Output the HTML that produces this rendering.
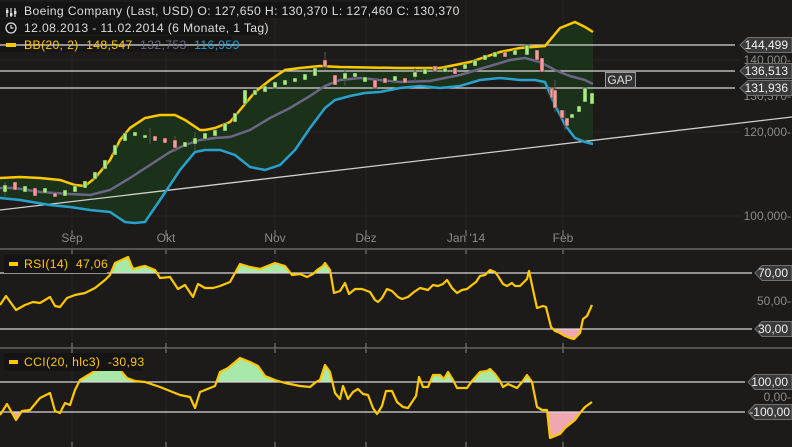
<!DOCTYPE html>
<html><head><meta charset="utf-8"><style>
html,body{margin:0;padding:0;background:#1c1b1a;width:792px;height:447px;overflow:hidden}
svg{display:block;font-family:"Liberation Sans",sans-serif}
</style></head><body>
<svg width="792" height="447" viewBox="0 0 792 447">
<defs>
<clipPath id="rsiUp"><rect x="0" y="250" width="792" height="23"/></clipPath>
<clipPath id="rsiDn"><rect x="0" y="329" width="792" height="19"/></clipPath>
<clipPath id="cciUp"><rect x="0" y="349" width="792" height="33"/></clipPath>
<clipPath id="cciDn"><rect x="0" y="412" width="792" height="35"/></clipPath>
</defs>
<rect width="792" height="447" fill="#1c1b1a"/>
<g stroke="#262524" stroke-width="1">
<line x1="72" y1="0" x2="72" y2="447"/><line x1="166" y1="0" x2="166" y2="447"/><line x1="275" y1="0" x2="275" y2="447"/><line x1="366" y1="0" x2="366" y2="447"/><line x1="466" y1="0" x2="466" y2="447"/><line x1="563" y1="0" x2="563" y2="447"/>
<line x1="0" y1="60" x2="740" y2="60"/><line x1="0" y1="132" x2="740" y2="132"/><line x1="0" y1="216" x2="740" y2="216"/>
</g>
<path fill="#1b3119" d="M0,178 L20,177 L40,178 L60,180 L75,185 L85,186 L95,178 L110,160 L120,140 L130,128 L145,118 L160,115 L175,115 L185,120 L200,130 L205,130 L215,128 L230,122 L240,110 L255,92 L270,80 L285,70 L300,68 L320,66 L340,67 L400,68 L440,68 L470,62 L500,52 L520,48 L545,46 L560,28 L575,22 L585,27 L593,32 L593,143 L585,142 L575,138 L565,125 L555,110 L545,90 L535,80 L520,80 L500,78 L480,80 L460,86 L440,88 L420,86 L400,88 L380,92 L365,93 L350,96 L335,100 L325,108 L310,128 L295,150 L280,165 L265,170 L250,167 L235,155 L220,150 L205,150 L195,152 L180,170 L160,200 L145,222 L135,223 L125,222 L110,212 L90,210 L70,207 L50,205 L20,200 L0,198 Z"/>
<line x1="0" y1="210" x2="792" y2="117" stroke="#cfcfcf" stroke-width="1.3"/>
<g stroke="#d8d8d8" stroke-width="1.3"><line x1="0" y1="45" x2="735" y2="45"/><line x1="0" y1="71" x2="735" y2="71"/><line x1="0" y1="88" x2="735" y2="88"/></g>
<polyline fill="none" stroke="#6b6685" stroke-width="2.5" points="0,188 15,188 40,192 70,194 90,195 110,190 130,178 150,165 170,152 185,145 200,140 215,138 230,137 250,130 270,118 290,108 310,96 325,86 340,80 360,78 380,80 400,82 430,81 460,75 490,66 510,60 525,58 540,62 555,70 570,76 585,80 593,84"/>
<polyline fill="none" stroke="#2aa0cc" stroke-width="2.5" points="0,198 20,200 50,205 70,207 90,210 110,212 125,222 135,223 145,222 160,200 180,170 195,152 205,150 220,150 235,155 250,167 265,170 280,165 295,150 310,128 325,108 335,100 350,96 365,93 380,92 400,88 420,86 440,88 460,86 480,80 500,78 520,80 535,80 545,82 555,105 565,125 575,138 585,142 593,144"/>
<polyline fill="none" stroke="#ffc800" stroke-width="2.5" points="0,178 20,177 40,178 60,180 75,185 85,186 95,178 110,160 120,140 130,128 145,118 160,115 175,115 185,120 200,130 205,130 215,128 230,122 240,110 255,92 270,80 285,70 300,68 320,66 340,67 400,68 440,68 470,62 500,52 520,48 545,46 560,28 575,22 585,27 593,32"/>
<g stroke="#555" stroke-width="1">
<line x1="5" y1="182" x2="5" y2="196"/><line x1="150" y1="128" x2="150" y2="144"/><line x1="325" y1="52" x2="325" y2="70"/><line x1="555" y1="80" x2="555" y2="112"/><line x1="565" y1="110" x2="565" y2="130"/><line x1="175" y1="136" x2="175" y2="152"/><line x1="195" y1="132" x2="195" y2="150"/><line x1="345" y1="68" x2="345" y2="86"/><line x1="415" y1="68" x2="415" y2="82"/>
</g>
<g fill="#a6ee80" stroke="#2d3b25" stroke-width="0.5">
<rect x="3" y="185" width="4" height="7"/><rect x="23" y="186" width="4" height="6"/><rect x="43" y="188" width="4" height="5"/><rect x="63" y="190" width="4" height="6"/><rect x="73" y="186" width="4" height="6"/><rect x="83" y="181" width="4" height="7"/><rect x="93" y="172" width="4" height="7"/><rect x="103" y="160" width="4" height="9"/><rect x="113" y="145" width="4" height="10"/><rect x="123" y="133" width="4" height="8"/><rect x="133" y="132" width="4" height="4"/><rect x="143" y="135" width="4" height="3"/><rect x="183" y="142" width="4" height="5"/><rect x="193" y="138" width="4" height="6"/><rect x="203" y="133" width="4" height="6"/><rect x="213" y="130" width="4" height="6"/><rect x="223" y="123" width="4" height="8"/><rect x="233" y="113" width="4" height="9"/><rect x="243" y="90" width="4" height="14"/><rect x="253" y="90" width="4" height="5"/><rect x="263" y="86" width="4" height="6"/><rect x="273" y="82" width="4" height="6"/><rect x="283" y="80" width="4" height="5"/><rect x="293" y="78" width="4" height="4"/><rect x="303" y="74" width="4" height="6"/><rect x="313" y="68" width="4" height="8"/><rect x="343" y="73" width="4" height="6"/><rect x="353" y="73" width="4" height="4"/><rect x="363" y="77" width="4" height="5"/><rect x="393" y="76" width="4" height="5"/><rect x="413" y="72" width="4" height="5"/><rect x="423" y="69" width="4" height="5"/><rect x="443" y="68" width="4" height="4"/><rect x="463" y="64" width="4" height="5"/><rect x="473" y="60" width="4" height="6"/><rect x="483" y="55" width="4" height="5"/><rect x="493" y="52" width="4" height="5"/><rect x="513" y="50" width="4" height="5"/><rect x="525" y="45" width="4" height="10"/><rect x="570" y="114" width="4" height="4"/><rect x="577" y="106" width="4" height="6"/><rect x="583" y="88" width="4" height="14"/><rect x="590" y="93" width="4" height="11"/>
</g>
<g fill="#f49c9c" stroke="#3b2525" stroke-width="0.5">
<rect x="13" y="182" width="4" height="8"/><rect x="33" y="188" width="4" height="8"/><rect x="53" y="193" width="4" height="4"/><rect x="153" y="136" width="4" height="5"/><rect x="163" y="138" width="4" height="5"/><rect x="173" y="140" width="4" height="8"/><rect x="323" y="60" width="4" height="7"/><rect x="333" y="75" width="4" height="10"/><rect x="373" y="80" width="4" height="8"/><rect x="383" y="78" width="4" height="5"/><rect x="403" y="78" width="4" height="5"/><rect x="433" y="66" width="4" height="5"/><rect x="453" y="68" width="4" height="6"/><rect x="503" y="52" width="4" height="5"/><rect x="535" y="50" width="4" height="10"/><rect x="540" y="58" width="4" height="14"/><rect x="550" y="88" width="4" height="10"/><rect x="553" y="90" width="4" height="18"/><rect x="560" y="110" width="4" height="8"/><rect x="565" y="118" width="4" height="8"/>
</g>
<rect x="605.5" y="72.5" width="30" height="15" fill="#333" stroke="#999"/>
<text x="620" y="84" fill="#ddd" font-size="12" text-anchor="middle">GAP</text>
<g stroke="#666" stroke-width="1.5"><line x1="0" y1="249" x2="792" y2="249"/><line x1="0" y1="348" x2="792" y2="348"/></g>
<g stroke="#888" stroke-width="1"><line x1="72" y1="230" x2="72" y2="236"/><line x1="166" y1="230" x2="166" y2="236"/><line x1="275" y1="230" x2="275" y2="236"/><line x1="366" y1="230" x2="366" y2="236"/><line x1="466" y1="230" x2="466" y2="236"/><line x1="563" y1="230" x2="563" y2="236"/>
<line x1="72" y1="250" x2="72" y2="254"/><line x1="166" y1="250" x2="166" y2="254"/><line x1="275" y1="250" x2="275" y2="254"/><line x1="366" y1="250" x2="366" y2="254"/><line x1="466" y1="250" x2="466" y2="254"/><line x1="563" y1="250" x2="563" y2="254"/>
<line x1="72" y1="343" x2="72" y2="348"/><line x1="166" y1="343" x2="166" y2="348"/><line x1="275" y1="343" x2="275" y2="348"/><line x1="366" y1="343" x2="366" y2="348"/><line x1="466" y1="343" x2="466" y2="348"/><line x1="563" y1="343" x2="563" y2="348"/>
<line x1="72" y1="349" x2="72" y2="353"/><line x1="166" y1="349" x2="166" y2="353"/><line x1="275" y1="349" x2="275" y2="353"/><line x1="366" y1="349" x2="366" y2="353"/><line x1="466" y1="349" x2="466" y2="353"/><line x1="563" y1="349" x2="563" y2="353"/>
<line x1="72" y1="442" x2="72" y2="447"/><line x1="166" y1="442" x2="166" y2="447"/><line x1="275" y1="442" x2="275" y2="447"/><line x1="366" y1="442" x2="366" y2="447"/><line x1="466" y1="442" x2="466" y2="447"/><line x1="563" y1="442" x2="563" y2="447"/></g>
<g fill="#8a8a8a" font-size="12" text-anchor="middle"><text x="72" y="242">Sep</text><text x="166" y="242">Okt</text><text x="275" y="242">Nov</text><text x="366" y="242">Dez</text><text x="466" y="242">Jan '14</text><text x="563" y="242">Feb</text></g>
<path clip-path="url(#rsiUp)" fill="#a8e8a8" d="M0,305 L6,296 L16,310 L25,305 L33,302 L40,303 L50,297 L55,306 L60,307 L67,298 L75,295 L85,293 L95,288 L105,280 L110,275 L115,263 L128,257 L133,269 L140,267 L145,266 L155,270 L160,278 L170,277 L178,289 L185,285 L193,297 L198,284 L205,288 L213,288 L220,286 L230,282 L240,264 L250,267 L260,269 L275,263 L285,266 L292,275 L300,274 L307,277 L313,274 L317,270 L323,266 L325,263 L330,270 L334,293 L340,291 L345,283 L349,294 L355,289 L362,289 L370,292 L375,300 L378,302 L382,298 L387,289 L392,291 L398,297 L402,299 L408,297 L414,292 L420,288 L428,290 L433,285 L438,286 L443,284 L447,280 L452,288 L457,293 L462,290 L467,289 L472,285 L476,282 L480,276 L485,275 L490,270 L495,272 L498,276 L503,284 L507,286 L512,283 L515,286 L520,286 L527,279 L529,271 L532,285 L537,308 L543,306 L546,307 L551,327 L555,331 L560,333 L565,336 L570,338 L574,339 L580,333 L583,319 L587,316 L592,305 L592,301 L0,301 Z"/>
<path clip-path="url(#rsiDn)" fill="#f0a8b0" d="M537,308 L543,306 L546,307 L551,327 L555,331 L560,333 L565,336 L570,338 L574,339 L580,333 L583,319 L587,316 L592,305 L592,301 L537,301 Z"/>
<g stroke="#d8d8d8" stroke-width="1.3"><line x1="0" y1="273" x2="752" y2="273"/><line x1="0" y1="329" x2="752" y2="329"/></g>
<polyline fill="none" stroke="#ffc800" stroke-width="2.2" stroke-linejoin="round" points="0,305 6,296 16,310 25,305 33,302 40,303 50,297 55,306 60,307 67,298 75,295 85,293 95,288 105,280 110,275 115,263 128,257 133,269 140,267 145,266 155,270 160,278 170,277 178,289 185,285 193,297 198,284 205,288 213,288 220,286 230,282 240,264 250,267 260,269 275,263 285,266 292,275 300,274 307,277 313,274 317,270 323,266 325,263 330,270 334,293 340,291 345,283 349,294 355,289 362,289 370,292 375,300 378,302 382,298 387,289 392,291 398,297 402,299 408,297 414,292 420,288 428,290 433,285 438,286 443,284 447,280 452,288 457,293 462,290 467,289 472,285 476,282 480,276 485,275 490,270 495,272 498,276 503,284 507,286 512,283 515,286 520,286 527,279 529,271 532,285 537,308 543,306 546,307 551,327 555,331 560,333 565,336 570,338 574,339 580,333 583,319 587,316 592,305"/>
<path clip-path="url(#cciUp)" fill="#a8e8a8" d="M0,415 L7,404 L16,420 L22,411 L30,410 L40,398 L50,393 L55,411 L60,413 L65,403 L70,405 L75,390 L80,380 L85,377 L95,371 L110,369 L120,370 L127,378 L135,381 L145,382 L160,387 L175,393 L180,395 L190,397 L195,408 L200,392 L210,388 L215,386 L220,372 L228,368 L240,358 L250,362 L258,366 L265,376 L275,380 L285,383 L300,386 L310,387 L316,382 L320,380 L325,365 L330,372 L335,393 L340,399 L343,386 L348,399 L353,392 L358,389 L363,394 L368,395 L373,408 L377,414 L382,406 L386,391 L392,391 L397,402 L403,407 L408,408 L412,402 L416,396 L419,377 L423,387 L428,387 L433,375 L440,375 L444,379 L448,372 L453,380 L457,388 L467,388 L472,381 L480,372 L487,371 L490,369 L495,374 L500,381 L503,387 L508,384 L517,388 L523,381 L527,375 L532,382 L537,407 L542,410 L547,410 L550,438 L555,436 L560,434 L565,428 L575,420 L580,413 L585,407 L592,402 L592,397 L0,397 Z"/>
<path clip-path="url(#cciDn)" fill="#f0a8b0" d="M0,415 L7,404 L16,420 L22,411 L30,410 L30,397 L0,397 Z M537,407 L542,410 L547,410 L550,438 L555,436 L560,434 L565,428 L575,420 L580,413 L585,407 L592,402 L592,397 L537,397 Z"/>
<g stroke="#d8d8d8" stroke-width="1.3"><line x1="0" y1="382" x2="745" y2="382"/><line x1="0" y1="412" x2="745" y2="412"/></g>
<polyline fill="none" stroke="#ffc800" stroke-width="2.2" stroke-linejoin="round" points="0,415 7,404 16,420 22,411 30,410 40,398 50,393 55,411 60,413 65,403 70,405 75,390 80,380 85,377 95,371 110,369 120,370 127,378 135,381 145,382 160,387 175,393 180,395 190,397 195,408 200,392 210,388 215,386 220,372 228,368 240,358 250,362 258,366 265,376 275,380 285,383 300,386 310,387 316,382 320,380 325,365 330,372 335,393 340,399 343,386 348,399 353,392 358,389 363,394 368,395 373,408 377,414 382,406 386,391 392,391 397,402 403,407 408,408 412,402 416,396 419,377 423,387 428,387 433,375 440,375 444,379 448,372 453,380 457,388 467,388 472,381 480,372 487,371 490,369 495,374 500,381 503,387 508,384 517,388 523,381 527,375 532,382 537,407 542,410 547,410 550,438 555,436 560,434 565,428 575,420 580,413 585,407 592,402"/>
<g font-size="12" fill="#8a8a8a" text-anchor="end">
<text x="791" y="64">140,000-</text><text x="791" y="100">130,370-</text><text x="791" y="136">120,000-</text><text x="791" y="220">100,000-</text>
<text x="791" y="305">50,00-</text><text x="791" y="401">0,00-</text>
</g>
<g fill="#3a3a3a" stroke="#707070" stroke-width="1">
<path d="M748,37.5 L792,37.5 L792,52.5 L748,52.5 L740,45 Z"/>
<path d="M748,63.5 L792,63.5 L792,78.5 L748,78.5 L740,71 Z"/>
<path d="M748,80.5 L792,80.5 L792,95.5 L748,95.5 L740,88 Z"/>
<path d="M762,265.5 L792,265.5 L792,280.5 L762,280.5 L755,273 Z"/>
<path d="M762,321.5 L792,321.5 L792,336.5 L762,336.5 L755,329 Z"/>
<path d="M755,374.5 L792,374.5 L792,389.5 L755,389.5 L748,382 Z"/>
<path d="M755,404.5 L792,404.5 L792,419.5 L755,419.5 L748,412 Z"/>
</g>
<g font-size="12" fill="#f0f0f0" text-anchor="end">
<text x="788" y="49">144,499</text><text x="788" y="75">136,513</text><text x="788" y="92">131,936</text>
<text x="788" y="277">70,00</text><text x="788" y="333">30,00</text>
<text x="788" y="386">100,00</text><text x="790" y="416">-100,00</text>
</g>
<rect x="0" y="2" width="448" height="16" fill="#141414"/>
<rect x="0" y="19" width="258" height="16" fill="#141414"/>
<rect x="0" y="36" width="232" height="16" fill="#141414" opacity="0.85"/>
<g stroke="#ddd" stroke-width="1.2"><line x1="7" y1="8" x2="7" y2="17"/><line x1="11" y1="8" x2="11" y2="17"/><line x1="15" y1="8" x2="15" y2="17"/></g>
<g fill="#ddd"><rect x="6" y="10" width="2.4" height="3"/><rect x="10" y="13" width="2.4" height="3"/><rect x="14" y="11" width="2.4" height="3"/></g>
<circle cx="11" cy="28" r="5" fill="none" stroke="#ddd" stroke-width="1.3"/><path d="M11,25 V28 H13.5" fill="none" stroke="#ddd" stroke-width="1.2"/>
<g font-size="12.2" letter-spacing="0.35">
<text x="24" y="15" fill="#ddd">Boeing Company (Last, USD)  O: 127,650  H: 130,370  L: 127,460  C: 130,370</text>
<text x="24" y="32" fill="#ddd">12.08.2013 - 11.02.2014 (6 Monate, 1 Tag)</text>
</g>
<line x1="0" y1="45" x2="235" y2="45" stroke="#d8d8d8" stroke-width="1.3"/>
<rect x="6" y="43" width="10" height="4" fill="#ffc800"/>
<text x="24" y="49" font-size="12.2" letter-spacing="0.35" xml:space="preserve"><tspan fill="#ffc800">BB(20, 2)  148,547</tspan>  <tspan fill="#6b6685">132,753</tspan>  <tspan fill="#2aa0cc">116,959</tspan></text>
<rect x="4" y="255" width="103" height="18" fill="#141414"/>
<rect x="9" y="262" width="9" height="4" fill="#ffc800"/>
<text x="24" y="268" font-size="12.2" letter-spacing="0.35" fill="#ffc800" xml:space="preserve">RSI(14)  47,06</text>
<rect x="4" y="353" width="138" height="18" fill="#141414"/>
<rect x="9" y="360" width="9" height="4" fill="#ffc800"/>
<text x="24" y="366" font-size="12.2" letter-spacing="0.35" fill="#ffc800" xml:space="preserve">CCI(20, hlc3)  -30,93</text>
</svg>
</body></html>
